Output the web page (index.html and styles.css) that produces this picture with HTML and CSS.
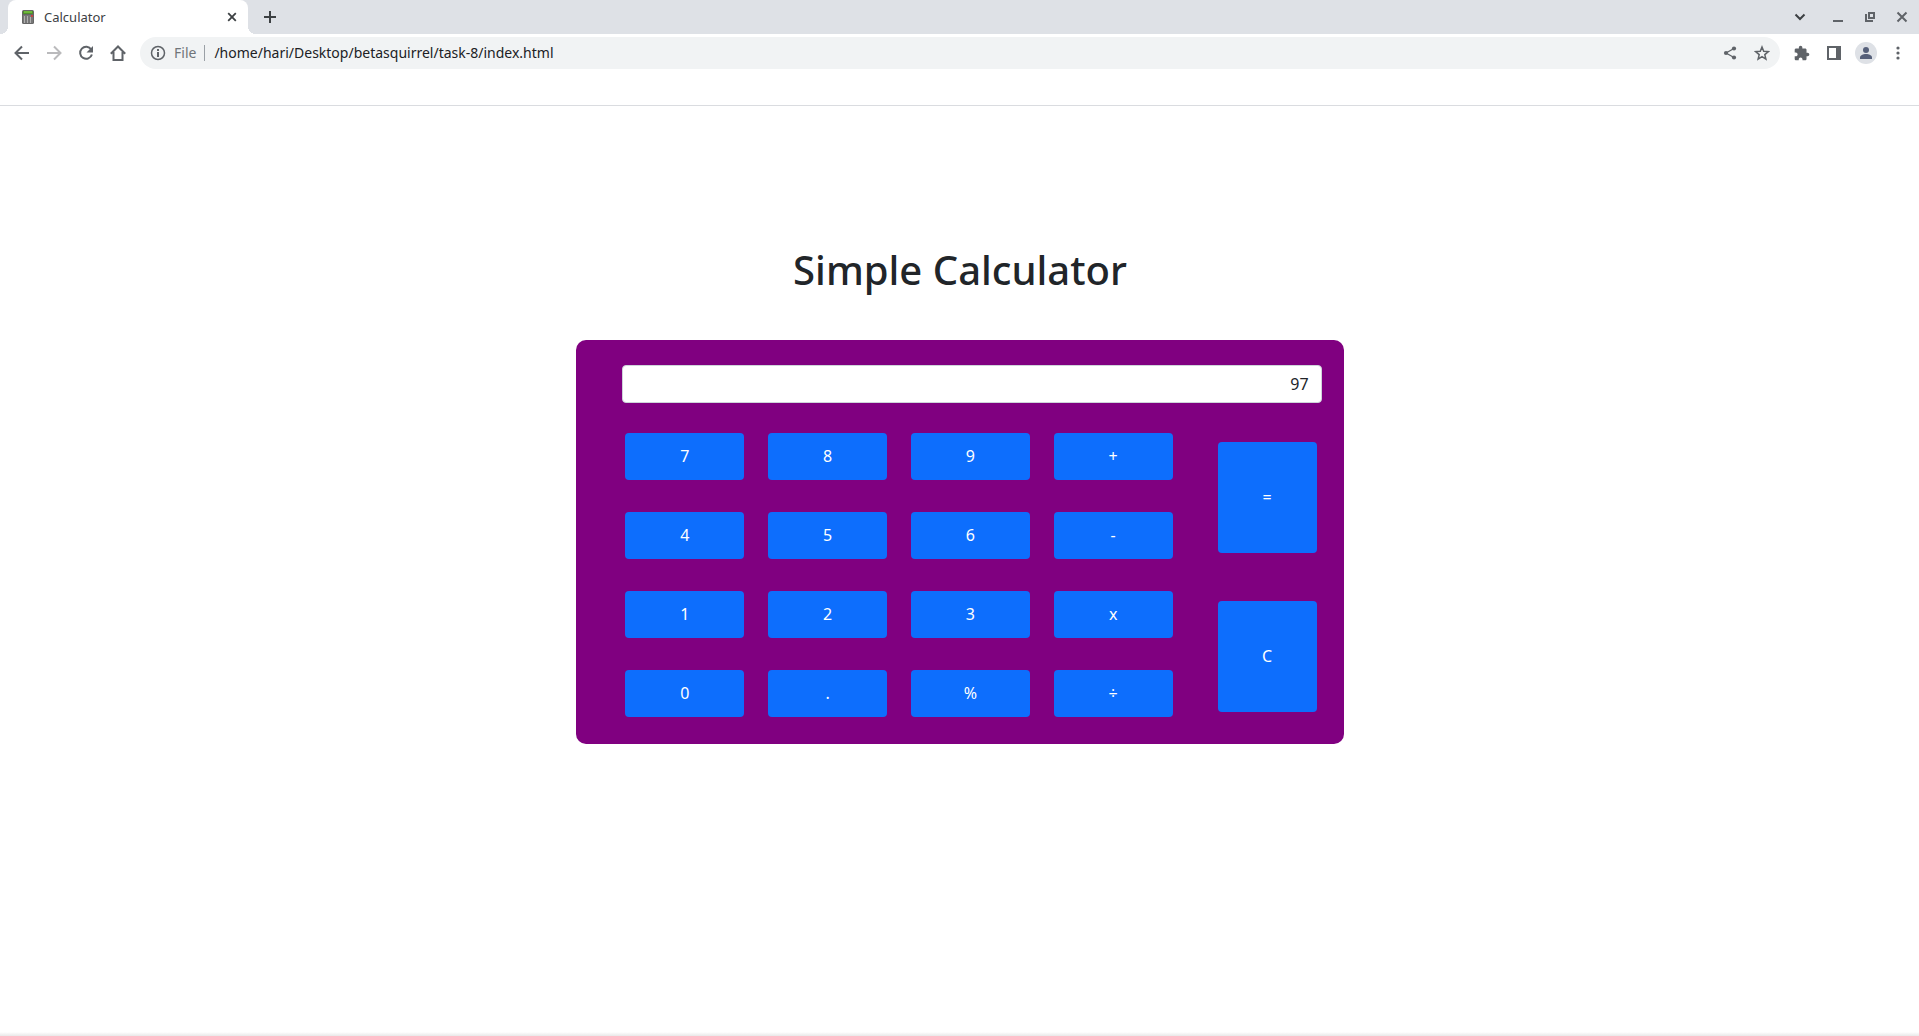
FILE: index.html
```html
<!DOCTYPE html>
<html lang="en">
<head>
<meta charset="utf-8">
<title>Calculator</title>
<link rel="stylesheet" href="styles.css">
</head>
<body>
<header class="browser">
  <div class="tab-strip">
    <div class="tab">
      <svg class="favicon" viewBox="0 0 16 16" aria-hidden="true">
        <rect x="2" y="1" width="12" height="14" rx="1.500" fill="#666"/>
        <rect x="3" y="2" width="10" height="3" fill="#4f8f2a"/>
        <path d="M4 3h8" stroke="#8ee04a"/>
        <path d="M3 6h10v8H3z" fill="#777"/>
        <path d="M4.500 7v7M7.500 7v7M10.500 8v6" stroke="#b0b0b0"/>
        <path d="M11 7h2" stroke="#d33" stroke-width="1.500"/>
      </svg>
      <span class="tab-title">Calculator</span>
      <button class="icon-button tab-close" type="button" aria-label="Close tab">
        <svg viewBox="0 0 16 16"><path d="M4.200 4.200l7.600 7.600m0-7.600l-7.600 7.600" stroke="#3c4043" stroke-width="1.800"/></svg>
      </button>
    </div>
    <button class="icon-button new-tab" type="button" aria-label="New tab">
      <svg viewBox="0 0 16 16"><path d="M8 2v12M2 8h12" stroke="#3c4043" stroke-width="2"/></svg>
    </button>
    <div class="window-controls">
      <button class="icon-button" type="button" aria-label="Search tabs"><svg viewBox="0 0 16 16"><path d="M3.500 5.500L8 10L12.500 5.500" stroke="#3c4043" stroke-width="2" fill="none"/></svg></button>
      <button class="icon-button" type="button" aria-label="Minimize"><svg viewBox="0 0 16 16"><path d="M3 12h10" stroke="#5f6368" stroke-width="2"/></svg></button>
      <button class="icon-button" type="button" aria-label="Restore"><svg viewBox="0 0 16 16"><path d="M7 4h5v5H7zM4 5v7h7" stroke="#5f6368" stroke-width="2" fill="none"/></svg></button>
      <button class="icon-button" type="button" aria-label="Close window"><svg viewBox="0 0 16 16"><path d="M3.500 3.500l9 9m0-9l-9 9" stroke="#5f6368" stroke-width="2"/></svg></button>
    </div>
  </div>
  <div class="toolbar">
    <div class="nav-buttons">
      <button class="icon-button" type="button" aria-label="Back"><svg viewBox="0 0 16 16"><path d="M15 8H2.500M8 1.500L1.500 8L8 14.500" stroke="#5f6368" stroke-width="2" fill="none"/></svg></button>
      <button class="icon-button" type="button" aria-label="Forward" disabled><svg viewBox="0 0 16 16"><path d="M1 8h12.500M8 1.500L14.500 8L8 14.500" stroke="#bababc" stroke-width="2" fill="none"/></svg></button>
      <button class="icon-button" type="button" aria-label="Reload"><svg viewBox="0 0 16 16"><path d="M13.200 4.500A6 6 0 1 0 13.900 9.500" stroke="#5f6368" stroke-width="2" fill="none"/><path d="M15 1v6.500H8.500z" fill="#5f6368"/></svg></button>
      <button class="icon-button" type="button" aria-label="Home"><svg viewBox="0 0 16 16"><path d="M.8 8.700L8 1.500L15.200 8.700M3.500 7v8h9V7" stroke="#5f6368" stroke-width="2" fill="none"/></svg></button>
    </div>
    <div class="address-bar">
      <svg class="info" viewBox="0 0 16 16" aria-hidden="true"><circle cx="8" cy="8" r="6.500" stroke="#5f6368" stroke-width="1.500" fill="none"/><path d="M8 7v5M8 4v2" stroke="#5f6368" stroke-width="2"/></svg>
      <span class="scheme">File</span>
      <input class="url" type="text" aria-label="Address" value="/home/hari/Desktop/betasquirrel/task-8/index.html">
      <button class="icon-button" type="button" aria-label="Share"><svg viewBox="0 0 16 16"><path d="M12 3.500L4 8l8 4.500" stroke="#5f6368" stroke-width="1.300" fill="none"/><g fill="#5f6368"><circle cx="12" cy="3.500" r="2.100"/><circle cx="4" cy="8" r="2.100"/><circle cx="12" cy="12.500" r="2.100"/></g></svg></button>
      <button class="icon-button" type="button" aria-label="Bookmark"><svg viewBox="0 0 16 16"><path d="M8 2l1.700 4.200 4.600.4-3.500 3 1.100 4.500L8 11.700l-3.900 2.400 1.100-4.500-3.500-3 4.600-.4z" stroke="#5f6368" stroke-width="1.500" fill="none"/></svg></button>
    </div>
    <div class="actions">
      <button class="icon-button" type="button" aria-label="Extensions"><svg viewBox="1 0 23 23"><path fill="#5f6368" d="M20.500 11H19V7c0-1.100-.9-2-2-2h-4V3.500C13 2.120 11.880 1 10.500 1S8 2.120 8 3.500V5H4c-1.100 0-1.990.9-1.990 2v3.800H3.500c1.490 0 2.700 1.210 2.700 2.700s-1.210 2.700-2.700 2.700H2V20c0 1.100.9 2 2 2h3.800v-1.500c0-1.490 1.210-2.700 2.700-2.700s2.700 1.210 2.700 2.700V22H17c1.100 0 2-.9 2-2v-4h1.500c1.380 0 2.500-1.120 2.500-2.500S21.880 11 20.500 11z"/></svg></button>
      <button class="icon-button" type="button" aria-label="Side panel"><svg viewBox="0 0 16 16"><path d="M1 1h14v14H1zM3 3v10h7V3z" fill="#5f6368" fill-rule="evenodd"/></svg></button>
      <button class="icon-button avatar" type="button" aria-label="Profile"><svg viewBox="0 0 16 16"><g fill="#56607a"><circle cx="8" cy="5" r="3"/><path d="M2 14v-1.500C2 10.500 5 9 8 9s6 1.500 6 3.500V14z"/></g></svg></button>
      <button class="icon-button" type="button" aria-label="Menu"><svg viewBox="0 0 16 16"><g fill="#5f6368"><circle cx="8" cy="3" r="1.600"/><circle cx="8" cy="8" r="1.600"/><circle cx="8" cy="13" r="1.600"/></g></svg></button>
    </div>
  </div>
</header>
<main class="page">
  <h1 class="title">Simple Calculator</h1>
  <section class="calculator" aria-label="Calculator">
    <input class="display" type="text" aria-label="Result" value="97">
    <div class="keypad">
      <div class="keys">
        <button class="key" type="button">7</button>
        <button class="key" type="button">8</button>
        <button class="key" type="button">9</button>
        <button class="key" type="button">+</button>
        <button class="key" type="button">4</button>
        <button class="key" type="button">5</button>
        <button class="key" type="button">6</button>
        <button class="key" type="button">-</button>
        <button class="key" type="button">1</button>
        <button class="key" type="button">2</button>
        <button class="key" type="button">3</button>
        <button class="key" type="button">x</button>
        <button class="key" type="button">0</button>
        <button class="key" type="button">.</button>
        <button class="key" type="button">%</button>
        <button class="key" type="button">÷</button>
      </div>
      <div class="tall-keys">
        <button class="key" type="button">=</button>
        <button class="key" type="button">C</button>
      </div>
    </div>
  </section>
</main>
</body>
</html>
```
FILE: styles.css
```css
* {
  box-sizing: border-box;
}

body {
  display: flex;
  flex-direction: column;
  min-height: 100vh;
  margin: 0;
  background: #fff;
  color: #212529;
  font-family: "Noto Sans", sans-serif;
  font-size: 16px;
  line-height: 24px;
}

button,
input {
  font: inherit;
}

/* Browser frame */
.browser {
  height: 106px;
  border-bottom: 1px solid #dadce0;
}

.tab-strip {
  display: flex;
  align-items: center;
  height: 34px;
  padding: 0 9px 0 8px;
  background: #dee1e6;
}

.tab {
  position: relative;
  display: flex;
  align-items: center;
  width: 240px;
  height: 34px;
  padding: 0 8px 0 12px;
  border-radius: 8px 8px 0 0;
  background: #fff;
}

.tab::before,
.tab::after {
  content: "";
  position: absolute;
  bottom: 0;
  width: 8px;
  height: 8px;
}

.tab::before {
  right: 100%;
  background: radial-gradient(circle at 0 0, #dee1e6 8px, #fff 8px);
}

.tab::after {
  left: 100%;
  background: radial-gradient(circle at 100% 0, #dee1e6 8px, #fff 8px);
}

.favicon {
  width: 16px;
  height: 16px;
}

.tab-title {
  flex: 1;
  margin-left: 8px;
  color: #3c4043;
  font-size: 13px;
}

.icon-button {
  display: flex;
  flex: none;
  align-items: center;
  justify-content: center;
  width: 16px;
  height: 16px;
  padding: 0;
  border: 0;
  background: none;
}

.icon-button svg {
  width: 16px;
  height: 16px;
}

.new-tab {
  margin-left: 14px;
}

.window-controls {
  display: flex;
  gap: 16px;
  margin-left: auto;
}

.window-controls .icon-button:first-child {
  margin-right: 6px;
}

.toolbar {
  display: flex;
  align-items: center;
  height: 38px;
  padding: 0 13px 0 14px;
}

.nav-buttons,
.actions {
  display: flex;
  align-items: center;
  gap: 16px;
}

.address-bar {
  display: flex;
  flex: 1;
  align-items: center;
  gap: 16px;
  height: 32px;
  margin: 0 14px;
  padding: 0 10px;
  border-radius: 16px;
  background: #f1f3f4;
  font-size: 14px;
}

.info {
  width: 16px;
  height: 16px;
}

.scheme {
  margin-left: -8px;
  padding-right: 8px;
  border-right: 1px solid #9aa0a6;
  color: #70757a;
  line-height: 16px;
}

.url {
  flex: 1;
  height: 24px;
  margin-left: -7px;
  padding: 0;
  border: 0;
  background: none;
  color: #202124;
}

.actions .avatar {
  width: 22px;
  height: 22px;
  margin: 0 -3px;
  border-radius: 50%;
  background: #dee1e6;
}

/* Calculator page */
.page {
  flex: 1;
  padding: 140px 0 0 1px;
  background: linear-gradient(to top, #e8e8e8, #fff 4px);
}

.title {
  margin: 0 0 46px;
  font-size: 40px;
  font-weight: 500;
  line-height: 48px;
  text-align: center;
}

.calculator {
  width: 40%;
  min-width: 480px;
  margin: 0 auto;
  padding: 25px 22px 27px 46px;
  border-radius: 10px;
  background: #800080;
}

.display {
  display: block;
  width: 100%;
  height: 38px;
  padding: 6px 12px;
  border: 1px solid #ced4da;
  border-radius: 4px;
  background: #fff;
  color: #212529;
  text-align: right;
}

.keypad {
  display: flex;
  gap: 45px;
  padding: 30px 5px 0 3px;
}

.keys {
  display: grid;
  flex: 1;
  grid-template-columns: repeat(4, 1fr);
  grid-auto-rows: 47px;
  gap: 32px 24px;
}

.tall-keys {
  display: grid;
  flex: none;
  grid-template-columns: 99px;
  gap: 48px;
  padding: 9px 0 5px;
}

.key {
  padding: 0 0 1px;
  border: 0;
  border-radius: 4px;
  background: #0d6efd;
  color: #fff;
}
```
